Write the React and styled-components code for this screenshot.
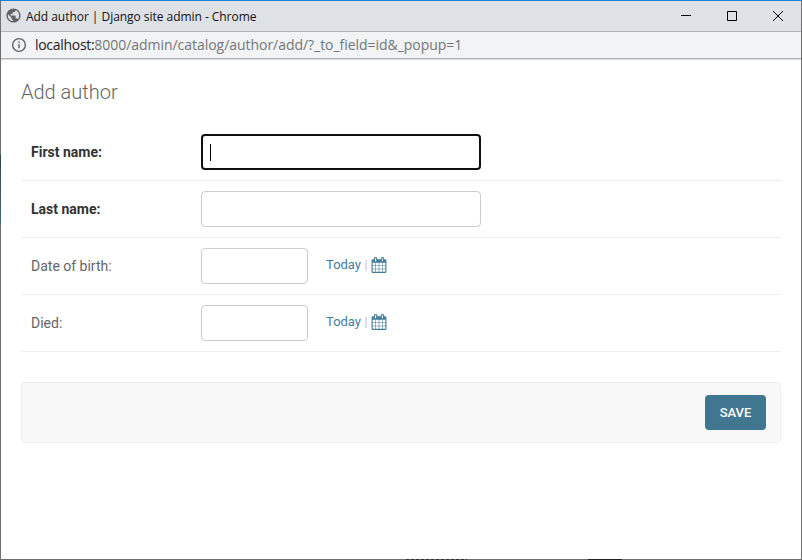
import React from "react";
import styled, { createGlobalStyle } from "styled-components";
import { MdPublic } from "react-icons/md";

const GlobalStyle = createGlobalStyle`
  * { box-sizing: border-box; }
  body { margin: 0; overflow: hidden; background: #fff; }
`;

const Window = styled.div`
  width: 802px;
  height: 560px;
  padding: 1px;
  background:
    linear-gradient(#1883d7, #1883d7) 0 0 / 802px 1px no-repeat,
    linear-gradient(#2d4652, #45697a) 0 155px / 1px 70px no-repeat,
    repeating-linear-gradient(90deg, #2b2f2e 0 3px, #666 3px 5px) 406px 559px / 61px 1px no-repeat,
    linear-gradient(#1d2220, #1d2220) 588px 559px / 34px 1px no-repeat,
    #6f6f6f;
  display: flex;
  flex-direction: column;
  font-family: Roboto, "Liberation Sans", sans-serif;
`;

const TitleBar = styled.header`
  height: 31px;
  flex: none;
  display: flex;
  align-items: center;
  background: #dee1e6;
  border-bottom: 1px solid #b0b2b5;
  padding-left: 4px;
`;

const WindowTitle = styled.div`
  flex: 1;
  margin-left: 4px;
  font: 12px/18px "Open Sans", "Noto Sans", sans-serif;
  letter-spacing: -0.04px;
  color: #111;
  white-space: nowrap;
  padding-top: 1px;
`;

const Controls = styled.div`
  display: flex;
`;

const ControlButton = styled.button`
  width: 46px;
  height: 29px;
  padding: 0;
  border: 0;
  background: none;
  display: flex;
  align-items: center;
  justify-content: center;
`;

const AddressBar = styled.div`
  height: 27px;
  flex: none;
  display: flex;
  align-items: center;
  background: #f1f3f4;
  border-bottom: 1px solid #b0b2b3;
  padding-left: 10px;
`;

const Url = styled.div`
  margin-left: 8px;
  font: 14px/20px "Open Sans", "Noto Sans", sans-serif;
  letter-spacing: -0.04px;
  color: #74777a;
  white-space: nowrap;
`;

const Host = styled.span`
  color: #202124;
  letter-spacing: -0.3px;
`;

const Content = styled.main`
  flex: 1;
  border-top: 1px solid #dedede;
  background: #fff;
  padding: 20px 20px 0;
`;

const Heading = styled.h1`
  margin: 0 0 20px;
  font-size: 20px;
  line-height: 24px;
  font-weight: 300;
  color: #666;
`;

const FormRow = styled.div`
  height: 57px;
  padding: 10px;
  border-bottom: 1px solid #eee;
  display: flex;
  align-items: center;
`;

const Label = styled.label`
  width: 170px;
  font-size: 14px;
  line-height: 18px;
  font-weight: ${(p) => (p.$required ? 700 : 400)};
  color: ${(p) => (p.$required ? "#333" : "#666")};
`;

const Field = styled.div`
  width: ${(p) => p.$width}px;
  height: 36px;
  border: ${(p) => (p.$focused ? "2px solid #101010" : "1px solid #ccc")};
  border-radius: 4px;
  padding-left: 7px;
  display: flex;
  align-items: center;
  background: #fff;
`;

const Caret = styled.span`
  width: 1px;
  height: 17px;
  background: #000;
`;

const Shortcuts = styled.div`
  margin: 0 0 2px 18px;
  display: flex;
  align-items: center;
  font-size: 13px;
  line-height: 18px;
`;

const TodayLink = styled.a`
  color: #447e9b;
  margin-right: 4px;
`;

const Divider = styled.span`
  width: 2px;
  height: 11px;
  background: #dce0ea;
  margin-right: 4px;
`;

const SubmitRow = styled.div`
  margin-top: 30px;
  height: 61px;
  padding: 12px 14px;
  background: #f8f8f8;
  border: 1px solid #eee;
  border-radius: 4px;
  display: flex;
  justify-content: flex-end;
`;

const SaveButton = styled.button`
  width: 61px;
  height: 35px;
  padding: 0;
  border: 0;
  border-radius: 4px;
  background: #417690;
  color: #fff;
  font: 500 13px/15px Roboto, sans-serif;
  letter-spacing: -0.1px;
`;

const GlobeIcon = styled(MdPublic)`
  width: 17px;
  height: 17px;
  flex: none;
  color: #5f6368;
  margin-bottom: 1px;
`;

function InfoIcon() {
  return (
    <svg width="16" height="16" viewBox="0 0 16 16">
      <circle cx="8" cy="8" r="6.400" fill="none" stroke="#5f6368" strokeWidth="1.400" />
      <path d="M8 7.200v4M8 4.600V6" stroke="#5f6368" strokeWidth="1.500" />
    </svg>
  );
}

function CalendarIcon() {
  return (
    <svg width="16" height="16" viewBox="0 0 1792 1792" fill="#447e9b">
      <path d="M192 1664h288v-288h-288v288zm352 0h320v-288h-320v288zm-352-352h288v-320h-288v320zm352 0h320v-320h-320v320zm-352-384h288v-288h-288v288zm736 736h320v-288h-320v288zm-384-736h320v-288h-320v288zm768 736h288v-288h-288v288zm-384-352h320v-320h-320v320zm-352-864v-288q0-13-9.500-22.500t-22.500-9.500h-64q-13 0-22.500 9.500t-9.500 22.500v288q0 13 9.500 22.500t22.500 9.500h64q13 0 22.500-9.500t9.500-22.500zm736 864h288v-320h-288v320zm-384-384h320v-288h-320v288zm384 0h288v-288h-288v288zm32-480v-288q0-13-9.500-22.500t-22.500-9.500h-64q-13 0-22.500 9.500t-9.500 22.500v288q0 13 9.500 22.500t22.500 9.500h64q13 0 22.500-9.500t9.500-22.500zm384-64v1280q0 52-38 90t-90 38h-1408q-52 0-90-38t-38-90v-1280q0-52 38-90t90-38h128v-96q0-66 47-113t113-47h64q66 0 113 47t47 113v96h384v-96q0-66 47-113t113-47h64q66 0 113 47t47 113v96h128q52 0 90 38t38 90z" />
    </svg>
  );
}

function DateRow({ label }) {
  return (
    <FormRow>
      <Label>{label}</Label>
      <Field $width={107} />
      <Shortcuts>
        <TodayLink>Today</TodayLink>
        <Divider />
        <CalendarIcon />
      </Shortcuts>
    </FormRow>
  );
}

export default function App() {
  return (
    <>
      <GlobalStyle />
      <Window>
        <TitleBar>
          <GlobeIcon />
          <WindowTitle>Add author | Django site admin - Chrome</WindowTitle>
          <Controls>
            <ControlButton aria-label="Minimize">
              <svg width="10" height="10"><path d="M0 4.500h10" stroke="#000" /></svg>
            </ControlButton>
            <ControlButton aria-label="Maximize">
              <svg width="10" height="10"><path d="M.5.500h9v9h-9z" fill="none" stroke="#000" /></svg>
            </ControlButton>
            <ControlButton aria-label="Close">
              <svg width="10" height="10"><path d="M0 0l10 10M10 0L0 10" stroke="#000" /></svg>
            </ControlButton>
          </Controls>
        </TitleBar>
        <AddressBar>
          <InfoIcon />
          <Url><Host>localhost:</Host>8000/admin/catalog/author/add/?_to_field=id&amp;_popup=1</Url>
        </AddressBar>
        <Content>
          <Heading>Add author</Heading>
          <FormRow>
            <Label $required>First name:</Label>
            <Field $width={280} $focused><Caret /></Field>
          </FormRow>
          <FormRow>
            <Label $required>Last name:</Label>
            <Field $width={280} />
          </FormRow>
          <DateRow label="Date of birth:" />
          <DateRow label="Died:" />
          <SubmitRow>
            <SaveButton>SAVE</SaveButton>
          </SubmitRow>
        </Content>
      </Window>
    </>
  );
}
